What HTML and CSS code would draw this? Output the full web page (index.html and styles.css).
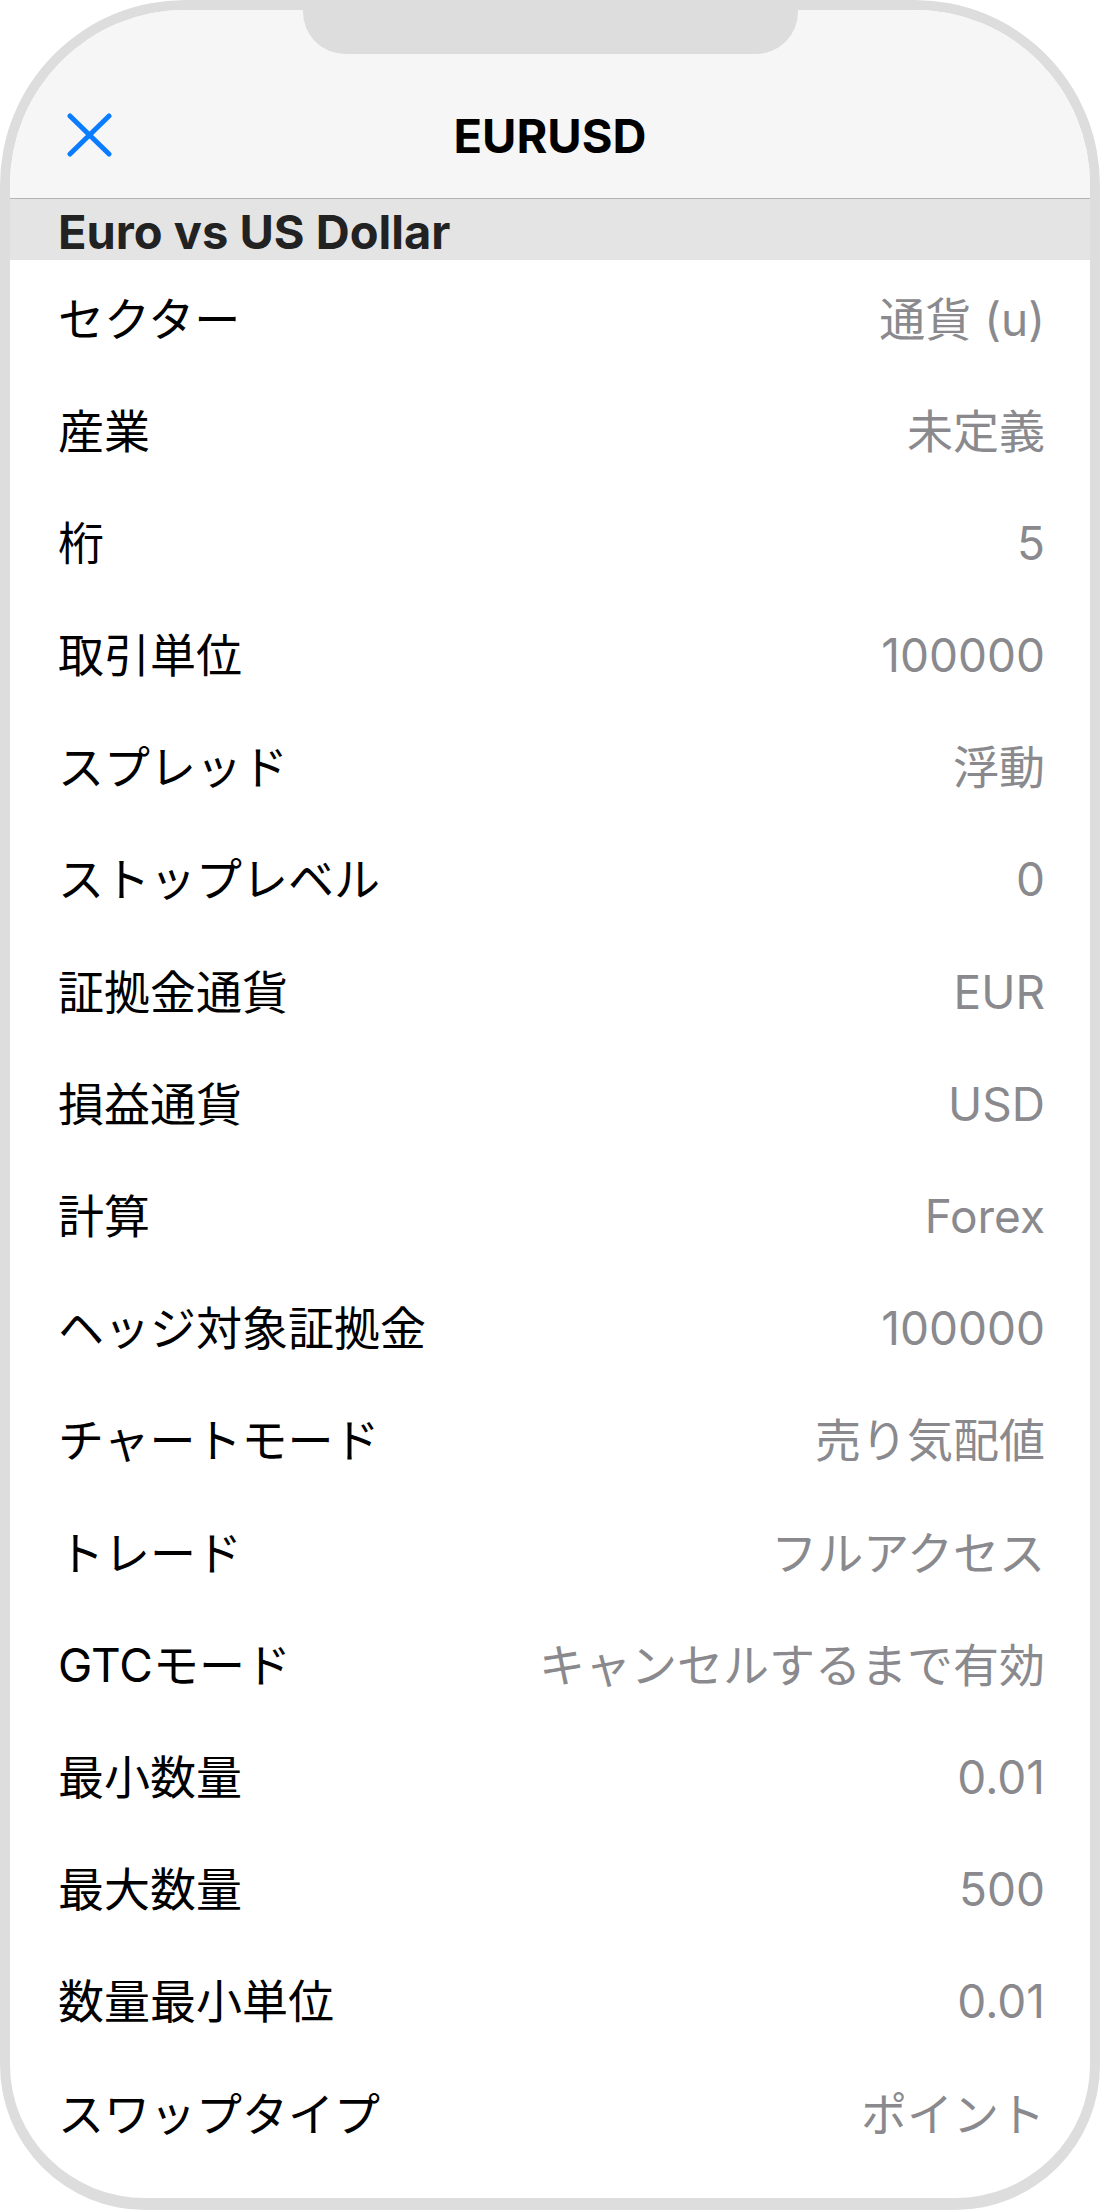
FILE: index.html
```html
<!DOCTYPE html>
<html lang="ja">
<head>
    <meta charset="UTF-8">
    <meta name="viewport" content="width=device-width, initial-scale=1.0">
    <title>EURUSD</title>
    <link rel="stylesheet" href="styles.css">
</head>
<body>
    <div class="phone">
        <div class="notch"></div>

        <header class="nav">
            <button class="nav-close" aria-label="閉じる">
                <svg width="45" height="44" viewBox="0 0 45 44">
                    <path d="M3 3 L42 41 M42 3 L3 41" fill="none" stroke="#0a7cff" stroke-width="5" stroke-linecap="round"/>
                </svg>
            </button>
            <h1 class="nav-title">EURUSD</h1>
            <span></span>
        </header>

        <h2 class="section">Euro vs US Dollar</h2>

        <ul class="specs">
            <li><span class="label">セクター</span><span class="value">通貨 (u)</span></li>
            <li><span class="label">産業</span><span class="value">未定義</span></li>
            <li><span class="label">桁</span><span class="value">5</span></li>
            <li><span class="label">取引単位</span><span class="value">100000</span></li>
            <li><span class="label">スプレッド</span><span class="value">浮動</span></li>
            <li><span class="label">ストップレベル</span><span class="value">0</span></li>
            <li><span class="label">証拠金通貨</span><span class="value">EUR</span></li>
            <li><span class="label">損益通貨</span><span class="value">USD</span></li>
            <li><span class="label">計算</span><span class="value">Forex</span></li>
            <li><span class="label">ヘッジ対象証拠金</span><span class="value">100000</span></li>
            <li><span class="label">チャートモード</span><span class="value">売り気配値</span></li>
            <li><span class="label">トレード</span><span class="value">フルアクセス</span></li>
            <li><span class="label">GTCモード</span><span class="value">キャンセルするまで有効</span></li>
            <li><span class="label">最小数量</span><span class="value">0.01</span></li>
            <li><span class="label">最大数量</span><span class="value">500</span></li>
            <li><span class="label">数量最小単位</span><span class="value">0.01</span></li>
            <li><span class="label">スワップタイプ</span><span class="value">ポイント</span></li>
        </ul>
    </div>
</body>
</html>
```

FILE: styles.css
```css
body {
    margin: 0;
    background-color: #fff;
    font-family: Inter, "Noto Sans CJK JP", sans-serif;
}
.phone {
    position: relative;
    width: 1100px;
    height: 2210px;
    box-sizing: border-box;
    border: 10px solid #dddddd;
    border-bottom-width: 12px;
    border-radius: 185px 185px 145px 145px;
    overflow: hidden;
    background-color: #fff;
}
.notch {
    position: absolute;
    top: 0;
    left: 293px;
    width: 495px;
    height: 44px;
    background-color: #dddddd;
    border-radius: 0 0 42px 42px;
}
.nav {
    display: grid;
    grid-template-columns: 1fr auto 1fr;
    align-items: center;
    height: 189px;
    box-sizing: border-box;
    padding: 62px 57px 0;
    background-color: #f6f6f6;
    border-bottom: 1px solid #b4b4b4;
}
.nav-close {
    justify-self: start;
    display: flex;
    padding: 0;
    border: none;
    background: none;
    cursor: pointer;
}
.nav-title {
    margin: 0;
    font-size: 47px;
    font-weight: 700;
    line-height: 1;
    color: #000;
}
.section {
    margin: 0;
    height: 61px;
    box-sizing: border-box;
    padding: 4px 0 0 48px;
    font-size: 47px;
    font-weight: 700;
    line-height: 57px;
    color: #222;
    background-color: #e4e4e4;
}
.specs {
    list-style: none;
    margin: 0;
    padding: 3px 45px 0 48px;
}
.specs li {
    display: flex;
    justify-content: space-between;
    align-items: center;
    height: 112.2px;
    font-size: 46px;
    line-height: 1.2;
}
.label {
    color: #000;
}
.value {
    color: #8a8a8e;
}
```
